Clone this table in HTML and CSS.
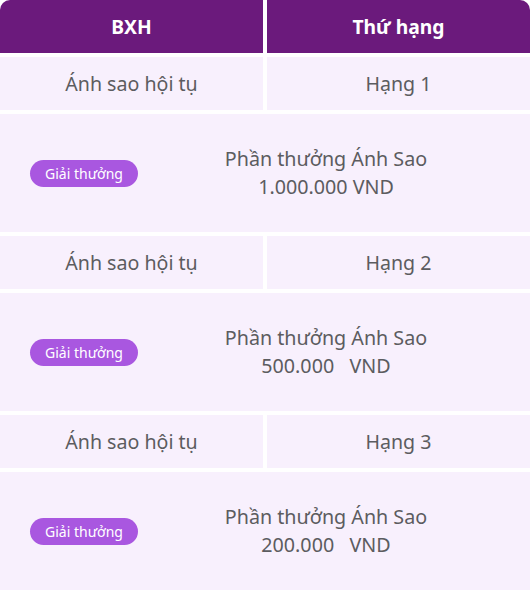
FILE: index.html
```html
<!DOCTYPE html>
<html lang="vi">
<head>
<meta charset="utf-8">
<link rel="stylesheet" href="styles.css">
</head>
<body>
<div class="board">
  <div class="row head">
    <div class="cell">BXH</div>
    <div class="cell">Thứ hạng</div>
  </div>

  <div class="row">
    <div class="cell">Ánh sao hội tụ</div>
    <div class="cell">Hạng 1</div>
  </div>
  <div class="prize">
    <span class="tag">Giải thưởng</span>
    <div class="prize-text">Phần thưởng Ánh Sao<br>1.000.000 VND</div>
  </div>

  <div class="row">
    <div class="cell">Ánh sao hội tụ</div>
    <div class="cell">Hạng 2</div>
  </div>
  <div class="prize">
    <span class="tag">Giải thưởng</span>
    <div class="prize-text">Phần thưởng Ánh Sao<br>500.000&nbsp;&nbsp;&nbsp;VND</div>
  </div>

  <div class="row">
    <div class="cell">Ánh sao hội tụ</div>
    <div class="cell">Hạng 3</div>
  </div>
  <div class="prize">
    <span class="tag">Giải thưởng</span>
    <div class="prize-text">Phần thưởng Ánh Sao<br>200.000&nbsp;&nbsp;&nbsp;VND</div>
  </div>
</div>
</body>
</html>
```

FILE: styles.css
```css
html, body {
  margin: 0;
  padding: 0;
  background: #ffffff;
}
body {
  font-family: "Noto Sans", "Liberation Sans", sans-serif;
  color: #5c5c60;
}
.board {
  width: 530px;
  display: flex;
  flex-direction: column;
  gap: 4px;
}
.row {
  display: grid;
  grid-template-columns: 263px 263px;
  column-gap: 4px;
  height: 53px;
}
.cell {
  background: #f8f0fd;
  display: flex;
  align-items: center;
  justify-content: center;
  font-size: 19.6px;
}
.head .cell {
  background: #6b1a7c;
  color: #ffffff;
  font-weight: 700;
  font-size: 19.3px;
}
.head .cell:first-child {
  border-top-left-radius: 10px;
}
.head .cell:last-child {
  border-top-right-radius: 10px;
}
.prize {
  height: 118px;
  background: #f8f0fd;
  display: flex;
  align-items: center;
  padding: 0 16px 0 30px;
}
.tag {
  width: 108px;
  height: 27px;
  border-radius: 14px;
  background: #a957e0;
  color: #ffffff;
  font-size: 14px;
  display: flex;
  align-items: center;
  justify-content: center;
  flex-shrink: 0;
}
.prize-text {
  flex: 1;
  text-align: center;
  font-size: 19.7px;
  line-height: 28px;
}
```
